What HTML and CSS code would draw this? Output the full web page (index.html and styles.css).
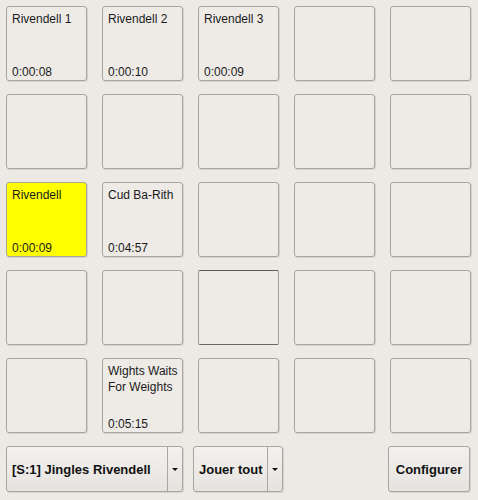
FILE: index.html
```html
<!DOCTYPE html>
<html>
<head>
<meta charset="utf-8">
<link rel="stylesheet" href="styles.css">
</head>
<body>
<div class="page">
  <div class="grid">
    <div class="cell"><span class="title">Rivendell 1</span><span class="time">0:00:08</span></div>
    <div class="cell"><span class="title">Rivendell 2</span><span class="time">0:00:10</span></div>
    <div class="cell"><span class="title">Rivendell 3</span><span class="time">0:00:09</span></div>
    <div class="cell"></div>
    <div class="cell"></div>

    <div class="cell"></div>
    <div class="cell"></div>
    <div class="cell"></div>
    <div class="cell"></div>
    <div class="cell"></div>

    <div class="cell playing"><span class="title">Rivendell</span><span class="time">0:00:09</span></div>
    <div class="cell"><span class="title">Cud Ba-Rith</span><span class="time">0:04:57</span></div>
    <div class="cell"></div>
    <div class="cell"></div>
    <div class="cell"></div>

    <div class="cell"></div>
    <div class="cell"></div>
    <div class="cell focused"></div>
    <div class="cell"></div>
    <div class="cell"></div>

    <div class="cell"></div>
    <div class="cell"><span class="title">Wights Waits For Weights</span><span class="time">0:05:15</span></div>
    <div class="cell"></div>
    <div class="cell"></div>
    <div class="cell"></div>
  </div>
  <div class="bar">
    <div class="combo combo-panel">
      <span class="combo-label">[S:1] Jingles Rivendell</span>
      <span class="combo-arrow"><span class="tri"></span></span>
    </div>
    <div class="combo combo-play">
      <span class="combo-label">Jouer tout</span>
      <span class="combo-arrow"><span class="tri"></span></span>
    </div>
    <div class="btn">Configurer</div>
  </div>
</div>
</body>
</html>
```

FILE: styles.css
```css
html, body {
  margin: 0;
  padding: 0;
  background: #edeae6;
}
body {
  width: 478px;
  height: 500px;
  overflow: hidden;
  font-family: "Liberation Sans", Arial, sans-serif;
  color: #1a1a1a;
}
.page {
  padding: 6px 8px 0 6px;
}
.grid {
  display: grid;
  grid-template-columns: repeat(5, 81px);
  grid-auto-rows: 75px;
  column-gap: 15px;
  row-gap: 13px;
}
.cell {
  box-sizing: border-box;
  border: 1px solid #a8a49f;
  border-radius: 3px;
  background: #eeebe7;
  box-shadow: 1px 1px 0 #d6d2cd;
  padding: 4px 0 0 5px;
  display: flex;
  flex-direction: column;
  justify-content: space-between;
  font-size: 12px;
  line-height: 16px;
}
.cell.playing {
  background: #ffff00;
}
.cell.focused {
  border-color: #5c5c5c #a09c97 #6a6a6a #a09c97;
  border-radius: 2px;
  box-shadow: none;
}
.title {
  display: block;
}
.time {
  display: block;
}
.bar {
  margin-top: 13px;
  height: 46px;
  display: flex;
  gap: 10px;
}
.combo, .btn {
  box-sizing: border-box;
  height: 46px;
  border: 1px solid #a8a49f;
  border-radius: 3px;
  background: linear-gradient(#f3f1ef, #e6e3df);
  box-shadow: 1px 1px 0 #d6d2cd;
  font-weight: bold;
  font-size: 13px;
  color: #111;
  display: flex;
  align-items: center;
}
.combo-panel { width: 177px; }
.combo-play { width: 90px; }
.combo-label {
  flex: 1;
  padding-left: 5px;
  white-space: nowrap;
}
.combo-arrow {
  width: 14px;
  align-self: stretch;
  border-left: 1px solid #aaa6a1;
  display: flex;
  align-items: center;
  justify-content: center;
}
.tri {
  width: 0;
  height: 0;
  border-left: 3px solid transparent;
  border-right: 3px solid transparent;
  border-top: 3px solid #111;
}
.btn {
  margin-left: auto;
  width: 82px;
  justify-content: center;
}
```
